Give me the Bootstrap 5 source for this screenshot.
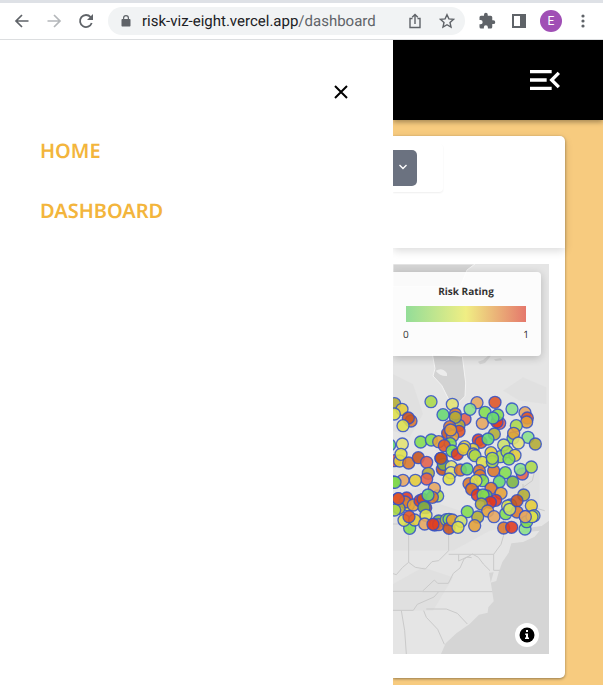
<!DOCTYPE html>
<html lang="en">
<head>
<meta charset="utf-8">
<meta name="viewport" content="width=device-width, initial-scale=1">
<title>Risk dashboard</title>
<link href="https://cdn.jsdelivr.net/npm/bootstrap@5.3.0/dist/css/bootstrap.min.css" rel="stylesheet">
<style>
  body { background: #f7cb7f; font-family: "Noto Sans", "Open Sans", sans-serif; text-rendering: geometricPrecision; }
  .browser-bar { border-top: 3px solid #dee1e6; border-bottom: 1px solid #dcdee0; height: 40px; color: #5f6368; padding: 0 10px 0 12px; }
  .tool-btn { border: 0; background: none; color: inherit; padding: 0; width: 20px; height: 28px; display: flex; align-items: center; justify-content: center; flex: none; }
  .address { background: #f1f3f4; border-radius: 14px; height: 28px; font: 15px/28px Roboto, sans-serif; padding: 0 8px 0 12px; min-width: 0; }
  .lock { margin-right: 10px; }
  .host { color: #202124; }
  .avatar { width: 22px; height: 22px; border-radius: 50%; background: #a04fb5; color: #fff; font: 12px/22px Roboto, sans-serif; }
  .drawer { width: 393px; padding: 40px 40px 0; }
  .drawer-close { width: 24px; height: 24px; }
  .drawer-links { gap: 30px; margin-top: 32px; }
  .drawer-links a { color: #f3b53c; font-size: 20px; font-weight: 600; line-height: 30px; text-decoration: none; }
  .app-header { height: 80px; padding-right: 38px; box-shadow: 0 2px 5px rgba(0,0,0,.35); position: relative; }
  .app-main { padding: 16px 38px 7px 0; }
  .panel { border-radius: 0 5px 5px 0; box-shadow: 0 1px 3px rgba(0,0,0,.4); }
  .filters { height: 112px; padding-top: 8px; box-shadow: 0 3px 8px rgba(0,0,0,.14); border-radius: 0 5px 0 0; }
  .filter-box { width: 50px; padding: 6px 0; border-radius: 0 4px 4px 0; box-shadow: 0 1px 2px rgba(0,0,0,.07); }
  .filter-select { appearance: none; width: 24px; height: 36px; border: 0; border-radius: 0 5px 5px 0; display: block;
    background: #6b7280 url("data:image/svg+xml,%3Csvg xmlns='http://www.w3.org/2000/svg' width='10' height='6' fill='none' stroke='white' stroke-width='1.4'%3E%3Cpath d='M1.5 1l3.5 3.5L8.500 1'/%3E%3C/svg%3E") no-repeat 5px 14px; }
  .map-area { margin: 16px 16px 24px 0; height: 390px; background: #e5e5e5; overflow: hidden; }
  .map-area > svg { width: 100%; height: 100%; display: block; }
  .legend { top: 8px; left: 0; right: 8px; height: 84px; background: rgba(255,255,255,.88); border-radius: 0 4px 4px 0; box-shadow: 0 2px 8px rgba(0,0,0,.2); padding: 12px 15px 0 13px; color: #333; font-family: "Open Sans", "Noto Sans", sans-serif; font-size: 10px; line-height: 15px; }
  .legend-title { font-weight: 700; }
  .legend-scale { height: 16px; margin: 7px 0 5px; background: linear-gradient(90deg, #93dd98, #f0ee84 50%, #e5786c); }
  .legend-ends { margin: 0 -3px; }
  .info-btn { right: 10px; bottom: 7px; width: 24px; height: 24px; border-radius: 50%; }
</style>
<script src="https://cdn.jsdelivr.net/npm/bootstrap@5.3.0/dist/js/bootstrap.bundle.min.js"></script>
</head>
<body class="min-vh-100 d-flex flex-column overflow-hidden">
<div class="browser-bar bg-white d-flex align-items-center gap-2">
  <div class="d-flex" style="gap:12px">
    <button class="tool-btn" aria-label="Back"><svg width="16" height="16" fill="none" stroke="currentColor" stroke-width="1.700"><path d="M14.500 8H2M8 2L2 8l6 6"/></svg></button>
    <button class="tool-btn" aria-label="Forward"><svg width="16" height="16" fill="none" stroke="#b4b7ba" stroke-width="1.700"><path d="M1.500 8H14M8 2l6 6-6 6"/></svg></button>
    <button class="tool-btn" aria-label="Reload"><svg width="16" height="16" fill="none" stroke="currentColor" stroke-width="1.800"><path d="M13.700 10A6 6 0 1 1 12.600 4.100"/><path d="M15 1v6H9z" fill="currentColor" stroke="none"/></svg></button>
  </div>
  <div class="address flex-grow-1 d-flex align-items-center ms-1">
    <svg class="lock flex-shrink-0" width="12" height="14" viewBox="0 0 12 14"><path fill="#5f6368" d="M3 5V4a3 3 0 0 1 6 0v1h.500c.600 0 1 .400 1 1v5.500c0 .600-.400 1-1 1h-7c-.600 0-1-.400-1-1V6c0-.600.400-1 1-1zm1.200 0h3.600V4a1.800 1.800 0 0 0-3.600 0z"/></svg>
    <div class="flex-grow-1 text-nowrap"><span class="host">risk-viz-eight.vercel.app</span>/dashboard</div>
    <div class="d-flex gap-2">
      <button class="tool-btn" aria-label="Share"><svg width="14" height="16" fill="none" stroke="currentColor" stroke-width="1.400"><path d="M4.500 5.500H2v9h10v-9H9.500M7 11V1.700M4.200 4.300L7 1.500l2.800 2.800"/></svg></button>
      <div class="ps-1"><button class="tool-btn" aria-label="Bookmark"><svg width="16" height="16" fill="none" stroke="currentColor" stroke-width="1.400"><path d="M8 1.700l1.900 4.200 4.500.500-3.400 3.100 1 4.500L8 11.700 4 14l1-4.500-3.400-3.100 4.500-.500z"/></svg></button></div>
    </div>
  </div>
  <div class="d-flex ps-1" style="gap:12px">
    <button class="tool-btn" aria-label="Extensions"><svg width="18" height="18" viewBox="0 0 24 24" fill="currentColor"><path d="M20.500 11H19V7a2 2 0 0 0-2-2h-4V3.500a2.500 2.500 0 0 0-5 0V5H4a2 2 0 0 0-2 2v3.800h1.500a2.700 2.700 0 0 1 0 5.400H2V20a2 2 0 0 0 2 2h3.800v-1.500a2.700 2.700 0 0 1 5.400 0V22H17a2 2 0 0 0 2-2v-4h1.500a2.500 2.500 0 0 0 0-5z"/></svg></button>
    <button class="tool-btn" aria-label="Side panel"><svg width="14" height="14"><path fill="currentColor" fill-rule="evenodd" d="M0 0h14v14H0zM2 2v10h6V2z"/></svg></button>
    <button class="tool-btn" aria-label="Profile"><span class="avatar flex-shrink-0">E</span></button>
    <button class="tool-btn" aria-label="Browser menu"><svg width="4" height="14" fill="currentColor"><circle cx="2" cy="2" r="1.600"/><circle cx="2" cy="7" r="1.600"/><circle cx="2" cy="12" r="1.600"/></svg></button>
  </div>
</div>

<div class="d-flex flex-grow-1">
  <nav class="drawer bg-white flex-shrink-0 d-flex flex-column" aria-label="Main">
    <button class="drawer-close btn p-0 border-0 align-self-end d-flex align-items-center justify-content-center" aria-label="Close menu"><svg width="14" height="14" stroke="#000" stroke-width="2"><path d="M1 1l12 12M13 1L1 13"/></svg></button>
    <div class="drawer-links d-flex flex-column align-items-start">
      <a href="#home">HOME</a>
      <a href="#dashboard">DASHBOARD</a>
    </div>
  </nav>

  <div class="flex-grow-1 d-flex flex-column overflow-hidden">
    <header class="app-header bg-black d-flex align-items-center justify-content-end">
      <button class="btn p-0 border-0" aria-label="Open menu"><svg width="40" height="40" viewBox="0 0 24 24" fill="#fff"><path d="M3 18h13v-2H3v2zM3 13h10v-2H3v2zM3 6v2h13V6H3zM21 15.590L17.420 12 21 8.410 19.590 7l-5 5 5 5z"/></svg></button>
    </header>
    <main class="app-main">
      <section class="panel bg-white d-flow-root">
        <div class="filters">
          <div class="filter-box"><select class="filter-select" aria-label="Filter"><option></option></select></div>
        </div>
        <div class="d-flex flex-column">
        <div class="map-area position-relative">
          <svg viewBox="0 0 468 1170" preserveAspectRatio="xMaxYMin slice" aria-label="Map of risk locations">
            <g fill="#dedede" opacity=".7"><path d="M0 700l80-30 60 50 90 30 30-60 100-20 80-50v150l-150 30-110 60H0zM0 960l90-50 90 30-60 100H0zM330 380l60-40 70 30v50l-80-10zM0 330l60 30 30 90-40 70-50-20z"/></g>
            <path fill="#d3d3d3" stroke="#f3f3f3" stroke-width="3" d="M0 0h246l-24 18-20 50H0zM118 270l8 44-6 22 26 28 22 44 10 15 22-10 16-16 2-40-10-80z"/>
            <path fill="#ececec" d="M128 320q20-12 34 8v8q-20 2-34-16z"/>
            <path fill="#d3d3d3" d="M255 293l15-5 22-18 4 3-20 24-15 4zM303 286l20-3 5 6-20 2z"/>
            <path fill="#d5d5d5" d="M468 770L446 786 396 793 382 806 440 800 425 818 390 834 355 838 347 866 328 894 317 925 310 951 293 956 302 925 288 926 294 960 298 985 302 1012 286 1030 284 1046 258 1052 230 1080 190 1108 158 1138 144 1170H468z"/>
            <g fill="none" stroke="#cacaca" stroke-width="3">
              <path d="M0 780h47v115l20 15 30 5 20-22 20-3 30-30V770M167 871h135l22-30 8-27v-50M47 895l-18 15-19 22-10-3M124 948l-36 34H0M88 983h210M137 983l-14 16-50 22-12 18H0M100 1035h60l33 13 30 32M92 1040l8 20 34 36 20 45M25 1040l10 60 5 70M124 948l10 10 32 0 15-30 20-16 12-27 25-15 18 10 15 20 20 20M197 871v20l25-12 14 2M302 871v48h18M345 740v60M390 660v80l30-10 35 10M430 600l-12 50-28 20"/>
            </g>
            <g id="dots" transform="translate(0 258)" stroke="#3150c8" stroke-opacity=".85" stroke-width="4" fill-opacity=".88"></g>
          </svg>
          <div class="legend position-absolute">
            <div class="legend-title text-center">Risk Rating</div>
            <div class="legend-scale"></div>
            <div class="legend-ends d-flex justify-content-between"><span>0</span><span>1</span></div>
          </div>
          <button class="info-btn btn p-0 border-0 bg-white position-absolute d-flex align-items-center justify-content-center" aria-label="Map attribution"><svg width="16" height="16"><circle cx="8" cy="8" r="7.500"/><path fill="#fff" d="M7 3h2v2H7zM6.200 6.500H9v4h1v1.500H6v-1.500h1V8h-.800z"/></svg></button>
        </div>
        </div>
      </section>
    </main>
  </div>
</div>
<script>
  // Location markers: x, y, colour key
  const colours = { g:'#83dd50', G:'#68d872', h:'#8be08a', l:'#abd94b', m:'#cce06b', y:'#dfe04b', z:'#e4e273', Y:'#e4cc39', o:'#e4a138', O:'#d9772c', p:'#e6a660', s:'#e2604a', r:'#df5426', R:'#e03a20', b:'#c6531f', v:'#b3ac35', k:'#7cb446' };
  const points = `5,161,v 27,178,Y 4,192,y 54,213,O 46,204,b 30,227,y 114,155,l 178,163,z 150,194,G 216,208,s 187,192,O
    198,226,v 187,202,v 198,244,r 170,230,O 164,250,b 179,258,o 173,240,o 252,158,p 231,178,h 306,157,r 276,187,g 268,220,p
    320,220,s 312,216,R 314,195,g 300,204,G 357,177,h 396,188,p 403,204,r 401,216,o 360,264,g 370,227,l 362,250,o 304,252,v
    405,262,h 427,282,v 28,282,z 83,276,g 115,270,g 137,275,o 172,281,g 154,287,r 256,270,R 264,277,r 285,267,G 332,285,m 376,279,z
    -10,285,G 5,332,s 20,333,Y 24,313,y 47,339,O 76,323,b 101,337,s 106,370,v 101,387,s 67,391,Y 30,391,p 2,396,k 6,397,g
    177,303,g 193,313,R 240,298,Y 215,290,Y 211,298,Y 144,325,b 148,358,b 151,343,k 144,325,b 175,350,z 174,368,z 168,387,y 202,360,O 222,357,G
    241,312,Y 246,317,l 268,337,y 322,320,l 294,308,Y 302,362,O 298,335,l 298,325,l 342,305,l 366,316,Y 348,327,g 259,362,O 261,377,O
    228,401,O 238,415,O 269,392,g 249,392,y 388,372,s 382,358,h 415,351,l 337,368,g 359,396,k 319,395,G 236,418,O 294,415,O 324,430,o
    253,435,R 280,438,k 270,435,g 308,451,R 292,457,R 265,462,v 284,483,o 303,500,p 254,501,v 223,485,g 245,527,o
    338,491,g 353,465,g 344,468,y 372,486,O 350,478,m 392,435,v 372,452,b 415,467,Y 423,497,l 397,500,p 396,537,h 401,515,g 417,500,y 397,500,p
    332,534,O 356,532,R 16,446,r 41,444,R 46,465,Y 36,456,O 61,465,o 18,475,v 5,480,l 16,446,r 81,452,R 90,448,b 134,438,l 124,415,p 118,442,O
    105,435,G 98,473,b 93,472,k 99,496,y 50,535,g 33,511,y 65,510,Y 48,500,r 95,522,p 137,513,k 125,525,O 137,524,O 120,523,R
    160,509,l 168,508,g 168,535,b 178,510,o 204,514,m 195,532,y`;
  const layer = document.getElementById('dots');
  for (const p of points.trim().split(/\s+/)) {
    const [x, y, c] = p.split(',');
    const dot = document.createElementNS('http://www.w3.org/2000/svg', 'circle');
    dot.setAttribute('cx', x);
    dot.setAttribute('cy', y);
    dot.setAttribute('r', 18);
    dot.setAttribute('fill', colours[c]);
    layer.appendChild(dot);
  }
</script>
</body>
</html>
